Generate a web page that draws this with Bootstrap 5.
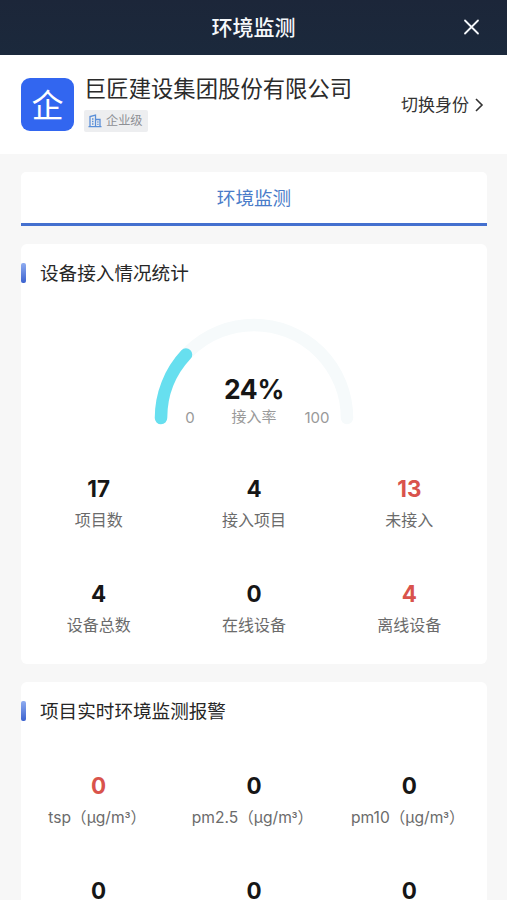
<!DOCTYPE html>
<html lang="zh-CN">
<head>
<meta charset="utf-8">
<meta name="viewport" content="width=device-width, initial-scale=1">
<title>环境监测</title>
<link href="https://cdn.jsdelivr.net/npm/bootstrap@5.3.0/dist/css/bootstrap.min.css" rel="stylesheet">
<style>
html { overflow: hidden; }
body { background: #f7f7f7; color: #222; font-family: Inter, "Noto Sans CJK SC", sans-serif; height: 900px; overflow: hidden; }
.topbar { height: 55px; background: linear-gradient(#1c2639, #1b293c); color: #f5f8fb; }
.topbar-title { font-size: 21px; font-weight: 500; line-height: 55px; }
.topbar-side { width: 36px; height: 24px; }
.identity { height: 99px; padding: 0 21px; }
.org-tile { width: 53px; height: 53px; border-radius: 9px; background: #3266f0; color: #fff; font-size: 32px; line-height: 56px; font-weight: 400; }
.org-info { margin-left: 10px; padding-bottom: 1px; }
.org-name { font-size: 22.35px; line-height: 30px; color: #2b2b2b; margin-top: -3px; }
.org-level { height: 22px; width: 64px; background: #edeef0; color: #8d9095; font-size: 12.2px; border-radius: 2px; line-height: 22px; margin-top: 6px; }
.switch-link { font-size: 17px; color: #333; line-height: 24px; }
.content-area { padding: 18px 20px 0 21px; }
.tab-item { height: 54px; background: #fff; border-radius: 5px 5px 0 0; border-bottom: 3px solid #4470cf; color: #4a7cc9; font-size: 18.6px; line-height: 53px; font-weight: 400; }
.panel { background: #fff; border-radius: 6px; margin-top: 18px; }
.panel-stats { height: 420px; }
.panel-alerts { height: 218px; border-radius: 6px 6px 0 0; overflow: hidden; }
.panel-head { height: 58px; }
.panel-mark { width: 5px; height: 20px; border-radius: 2px; background: linear-gradient(#8facf0, #3b62cf); margin-right: 14px; }
.panel-title { font-size: 18.6px; color: #262626; line-height: 28px; }
.gauge { width: 220px; height: 131px; display: block; margin: 7px auto 0; }
.gauge .pct { font-size: 26.5px; font-weight: 700; fill: #161616; letter-spacing: -.3px; }
.gauge .cap { font-size: 15px; fill: #999; }
.stat { height: 105px; }
.stat-num { font-size: 22.4px; font-weight: 650; color: #161616; line-height: 28px; }
.stat-num.warn { color: #d9534c; }
.stat-label { font-size: 16px; color: #6b6b6b; line-height: 24px; margin-top: 5px; white-space: nowrap; }
.unit-label { font-size: 15.6px; padding-right: 3px; line-height: 25px; }
.cube { font-family: Roboto, sans-serif; }
.stats-grid { padding-top: 35px; }
.alerts-grid { padding-top: 32px; }
</style>
<script src="https://cdn.jsdelivr.net/npm/bootstrap@5.3.0/dist/js/bootstrap.bundle.min.js"></script>
</head>
<body>
<header class="topbar d-flex justify-content-between align-items-center px-3">
  <span class="topbar-side"></span>
  <span class="topbar-title">环境监测</span>
  <svg class="topbar-side" viewBox="0 0 36 24" fill="none" stroke="#f5f8fb" stroke-width="1.8" stroke-linecap="round"><path d="M10 4.5 23 17.5M23 4.5 10 17.5"/></svg>
</header>
<section class="identity bg-white d-flex align-items-center">
  <div class="org-tile text-center flex-shrink-0">企</div>
  <div class="org-info flex-grow-1">
    <div class="org-name text-nowrap">巨匠建设集团股份有限公司</div>
    <div class="org-level d-flex align-items-center">
      <svg class="ms-1 me-1" width="14" height="14" viewBox="0 0 14 14" fill="none" stroke="#5a8fd8" stroke-width="1.3"><path d="M2 12.5V2.5L7.5 1V12.5M7.5 5.5H12V12.5M.5 12.7H13.5M4 5H5.5M4 7.5H5.5M4 10H5.5M9.3 8H10.5M9.3 10.3H10.5"/></svg>
      <span>企业级</span>
    </div>
  </div>
  <a class="switch-link text-decoration-none d-flex align-items-center text-nowrap" href="#">切换身份
    <svg class="ms-1" width="13" height="16" viewBox="0 0 13 16" fill="none" stroke="#333" stroke-width="1.6"><path d="M3 2 9 8 3 14"/></svg>
  </a>
</section>
<main class="content-area">
  <div class="tab-item text-center">环境监测</div>
  <section class="panel panel-stats">
    <div class="panel-head d-flex align-items-center"><span class="panel-mark"></span><span class="panel-title">设备接入情况统计</span></div>
    <svg class="gauge" viewBox="144 309 220 131" text-anchor="middle">
      <g fill="none" stroke-width="12.5" stroke-linecap="round">
        <path d="M161 418A93 93 0 0 1 347 418" stroke="#f6fafb"/>
        <path d="M161 418A93 93 0 0 1 186 354.6" stroke="#67dfef"/>
      </g>
      <text class="pct" x="254" y="398.5">24%</text>
      <text class="cap" x="190" y="423">0</text>
      <text class="cap" x="254" y="422">接入率</text>
      <text class="cap" x="317" y="423">100</text>
    </svg>
    <div class="stats-grid row g-0 text-center">
      <div class="col-4 stat"><div class="stat-num">17</div><div class="stat-label">项目数</div></div>
      <div class="col-4 stat"><div class="stat-num">4</div><div class="stat-label">接入项目</div></div>
      <div class="col-4 stat"><div class="stat-num warn">13</div><div class="stat-label">未接入</div></div>
      <div class="col-4 stat"><div class="stat-num">4</div><div class="stat-label">设备总数</div></div>
      <div class="col-4 stat"><div class="stat-num">0</div><div class="stat-label">在线设备</div></div>
      <div class="col-4 stat"><div class="stat-num warn">4</div><div class="stat-label">离线设备</div></div>
    </div>
  </section>
  <section class="panel panel-alerts">
    <div class="panel-head d-flex align-items-center"><span class="panel-mark"></span><span class="panel-title">项目实时环境监测报警</span></div>
    <div class="alerts-grid row g-0 text-center">
      <div class="col-4 stat"><div class="stat-num warn">0</div><div class="stat-label unit-label">tsp（μg/m<span class="cube">³</span>）</div></div>
      <div class="col-4 stat"><div class="stat-num">0</div><div class="stat-label unit-label">pm2.5（μg/m<span class="cube">³</span>）</div></div>
      <div class="col-4 stat"><div class="stat-num">0</div><div class="stat-label unit-label">pm10（μg/m<span class="cube">³</span>）</div></div>
      <div class="col-4"><div class="stat-num">0</div></div>
      <div class="col-4"><div class="stat-num">0</div></div>
      <div class="col-4"><div class="stat-num">0</div></div>
    </div>
  </section>
</main>
</body>
</html>
